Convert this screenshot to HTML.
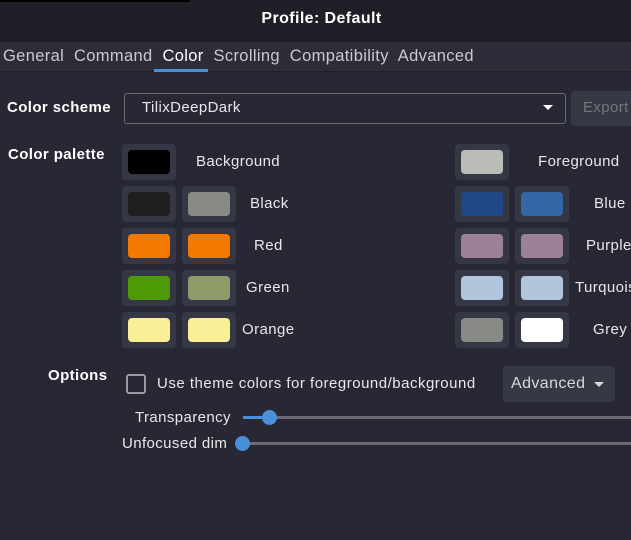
<!DOCTYPE html><html><head><style>
body{margin:0;width:631px;height:540px;background:#272834;font-family:"Liberation Sans",sans-serif;color:#e8e8ea;position:relative;overflow:hidden;font-size:15px;letter-spacing:0.4px}
.a{position:absolute;white-space:nowrap}
.b{position:absolute;width:54px;height:36px;background:#353745;border-radius:4px}
.b i{position:absolute;left:6px;top:6px;width:42px;height:24px;border-radius:4px}
.l{position:absolute;white-space:nowrap;font-size:15px}
</style></head><body>
<div class="a" style="left:0;top:0;width:631px;height:42px;background:#1e1f27"></div>
<div class="a" style="left:0;top:0;width:190px;height:2px;background:#000"></div>
<div class="a" style="left:0;top:10px;width:631px;text-align:center;font-weight:bold;font-size:16px;color:#fff;padding-left:12px;box-sizing:border-box">Profile: Default</div>
<div class="a" style="left:0;top:42px;width:631px;height:29px;background:#2c2d39;border-bottom:1px solid #1d1e26"></div>
<div class="a" style="left:3px;top:47px;font-size:16.5px;color:#c9cad0;letter-spacing:0.35px">General&nbsp; Command&nbsp; <span style="color:#fff">Color</span>&nbsp; Scrolling&nbsp; Compatibility&nbsp; Advanced</div>
<div class="a" style="left:154px;top:69px;width:54px;height:3px;background:#4a90d9"></div>
<div class="a" style="left:7px;top:99px;font-weight:bold;color:#fff">Color scheme</div>
<div class="a" style="left:124px;top:93px;width:440px;height:29px;border:1px solid #6b6c75;border-radius:3px;background:#272834"></div>
<div class="a" style="left:142px;top:99px;font-size:15px">TilixDeepDark</div>
<div class="a" style="left:543px;top:105px;width:0;height:0;border-left:5px solid transparent;border-right:5px solid transparent;border-top:5px solid #fff"></div>
<div class="a" style="left:571px;top:91px;width:70px;height:35px;background:#363844;border-radius:4px"></div>
<div class="a" style="left:583px;top:99px;color:#75767e">Export</div>
<div class="a" style="left:8px;top:146px;font-weight:bold;color:#fff">Color palette</div>

<div class="b" style="left:122px;top:144px"><i style="background:#000"></i></div>
<div class="l" style="left:196px;top:153px">Background</div>
<div class="b" style="left:455px;top:144px"><i style="background:#babdb6"></i></div>
<div class="l" style="left:538px;top:153px">Foreground</div>

<div class="b" style="left:122px;top:186px"><i style="background:#1f1f1f"></i></div>
<div class="b" style="left:182px;top:186px"><i style="background:#888a85"></i></div>
<div class="l" style="left:250px;top:195px">Black</div>
<div class="b" style="left:455px;top:186px"><i style="background:#1f4887"></i></div>
<div class="b" style="left:515px;top:186px"><i style="background:#3465a4"></i></div>
<div class="l" style="left:594px;top:195px">Blue</div>

<div class="b" style="left:122px;top:228px"><i style="background:#f57900"></i></div>
<div class="b" style="left:182px;top:228px"><i style="background:#f57900"></i></div>
<div class="l" style="left:254px;top:237px">Red</div>
<div class="b" style="left:455px;top:228px"><i style="background:#9c8299"></i></div>
<div class="b" style="left:515px;top:228px"><i style="background:#9c8299"></i></div>
<div class="l" style="left:586px;top:237px">Purple</div>

<div class="b" style="left:122px;top:270px"><i style="background:#4e9a06"></i></div>
<div class="b" style="left:182px;top:270px"><i style="background:#8f9c6a"></i></div>
<div class="l" style="left:246px;top:279px">Green</div>
<div class="b" style="left:455px;top:270px"><i style="background:#b2c5dc"></i></div>
<div class="b" style="left:515px;top:270px"><i style="background:#b2c5dc"></i></div>
<div class="l" style="left:575px;top:279px">Turquoise</div>

<div class="b" style="left:122px;top:312px"><i style="background:#f9ef96"></i></div>
<div class="b" style="left:182px;top:312px"><i style="background:#f9ef96"></i></div>
<div class="l" style="left:242px;top:321px">Orange</div>
<div class="b" style="left:455px;top:312px"><i style="background:#888a85"></i></div>
<div class="b" style="left:515px;top:312px"><i style="background:#fff"></i></div>
<div class="l" style="left:593px;top:321px">Grey</div>

<div class="a" style="left:48px;top:367px;font-weight:bold;color:#fff">Options</div>
<div class="a" style="left:126px;top:374px;width:16px;height:16px;border:2px solid #9a9ba2;border-radius:3px"></div>
<div class="a" style="left:157px;top:375px;letter-spacing:0.5px">Use theme colors for foreground/background</div>
<div class="a" style="left:503px;top:366px;width:112px;height:36px;background:#363844;border-radius:4px"></div>
<div class="a" style="left:511px;top:375px;color:#d8d9dd;font-size:16px">Advanced</div>
<div class="a" style="left:594px;top:382px;width:0;height:0;border-left:5px solid transparent;border-right:5px solid transparent;border-top:5px solid #d8d9dd"></div>

<div class="a" style="left:135px;top:409px">Transparency</div>
<div class="a" style="left:243px;top:416px;width:400px;height:3px;background:#6a6b73"></div>
<div class="a" style="left:243px;top:416px;width:26px;height:3px;background:#4a90d9"></div>
<div class="a" style="left:262px;top:410px;width:15px;height:15px;border-radius:50%;background:#4a90d9"></div>
<div class="a" style="left:122px;top:435px">Unfocused dim</div>
<div class="a" style="left:243px;top:442px;width:400px;height:3px;background:#6a6b73"></div>
<div class="a" style="left:235px;top:436px;width:15px;height:15px;border-radius:50%;background:#4a90d9"></div>
</body></html>
